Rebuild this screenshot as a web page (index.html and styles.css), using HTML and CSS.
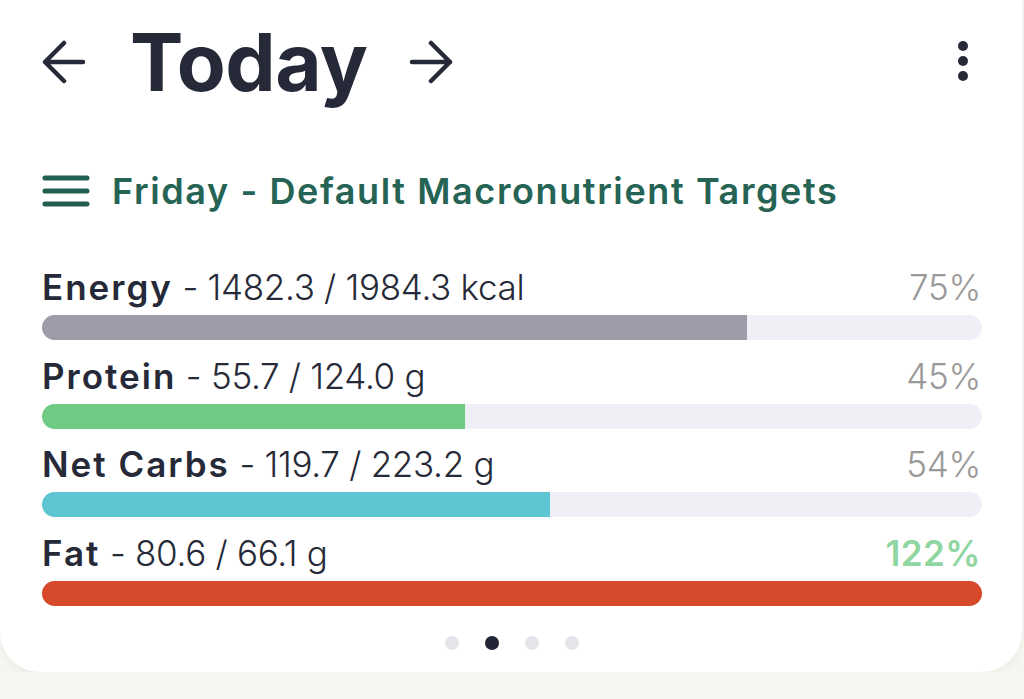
FILE: index.html
```html
<!DOCTYPE html>
<html lang="en">

<head>
    <meta charset="UTF-8">
    <meta name="viewport" content="width=device-width, initial-scale=1.0">
    <title>Today - Macros</title>
    <link rel="stylesheet" href="styles.css">
</head>

<body>
    <div class="card">
        <div class="header">
            <button class="nav-btn" aria-label="Previous day">
                <svg width="44" height="44" viewBox="0 0 44 44">
                    <path d="M3 22 H41 M22 3 L3 22 L22 41" fill="none" stroke="#262a38" stroke-width="4.5"
                        stroke-linecap="round" stroke-linejoin="round" />
                </svg>
            </button>
            <h1 class="title">Today</h1>
            <button class="nav-btn" aria-label="Next day">
                <svg width="44" height="44" viewBox="0 0 44 44">
                    <path d="M41 22 H3 M22 3 L41 22 L22 41" fill="none" stroke="#262a38" stroke-width="4.5"
                        stroke-linecap="round" stroke-linejoin="round" />
                </svg>
            </button>
            <div class="spacer"></div>
            <button class="more-btn" aria-label="More">
                <span></span><span></span><span></span>
            </button>
        </div>

        <div class="targets">
            <svg width="48" height="32" viewBox="0 0 48 32">
                <path d="M3 3 H45 M3 16 H45 M3 29 H45" stroke="#225f50" stroke-width="5" stroke-linecap="round" />
            </svg>
            <span>Friday - Default Macronutrient Targets</span>
        </div>

        <div class="macros">
            <div class="macro">
                <div class="macro-label">
                    <span><strong>Energy</strong> - 1482.3 / 1984.3 kcal</span>
                    <span class="pct">75%</span>
                </div>
                <div class="track"><div class="fill energy" style="width:75%"></div></div>
            </div>
            <div class="macro">
                <div class="macro-label">
                    <span><strong>Protein</strong> - 55.7 / 124.0 g</span>
                    <span class="pct">45%</span>
                </div>
                <div class="track"><div class="fill protein" style="width:45%"></div></div>
            </div>
            <div class="macro">
                <div class="macro-label">
                    <span><strong>Net Carbs</strong> - 119.7 / 223.2 g</span>
                    <span class="pct">54%</span>
                </div>
                <div class="track"><div class="fill carbs" style="width:54%"></div></div>
            </div>
            <div class="macro">
                <div class="macro-label">
                    <span><strong>Fat</strong> - 80.6 / 66.1 g</span>
                    <span class="pct over">122%</span>
                </div>
                <div class="track"><div class="fill fat" style="width:100%"></div></div>
            </div>
        </div>

        <div class="pager">
            <span class="dot"></span>
            <span class="dot active"></span>
            <span class="dot"></span>
            <span class="dot"></span>
        </div>
    </div>
</body>

</html>
```

FILE: styles.css
```css
body {
    font-family: Inter, "Noto Sans", sans-serif;
    background: #f7f5ef;
    margin: 0;
    padding: 0;
}

.card {
    width: 1022px;
    height: 672px;
    box-sizing: border-box;
    background: #fff;
    border-radius: 0 0 40px 40px;
    box-shadow: 0 2px 10px #0000000d;
    padding: 0 40px 0 42px;
}

.header {
    display: flex;
    align-items: center;
    height: 124px;
}

.nav-btn,
.more-btn {
    background: none;
    border: none;
    padding: 0;
    cursor: pointer;
}

.nav-btn svg {
    display: block;
}

.title {
    margin: 0 42px 0 44px;
    font-size: 80px;
    font-weight: 700;
    color: #262a38;
    letter-spacing: -0.5px;
    line-height: 1;
}

.spacer {
    flex: 1;
}

.more-btn {
    display: flex;
    flex-direction: column;
    gap: 5px;
    margin-right: 14px;
    margin-top: -2px;
}

.more-btn span {
    width: 10px;
    height: 10px;
    border-radius: 50%;
    background: #262a38;
}

.targets {
    display: flex;
    align-items: center;
    gap: 22px;
    margin-top: 45px;
    color: #256354;
    font-size: 36px;
    line-height: 44px;
    font-weight: 600;
    letter-spacing: 1.6px;
}

.targets svg {
    display: block;
}

.macros {
    margin-top: 53px;
}

.macro {
    margin-bottom: 14.6px;
}

.macro:last-child {
    margin-bottom: 0;
}

.macro-label {
    display: flex;
    justify-content: space-between;
    align-items: baseline;
    font-size: 35px;
    font-weight: 300;
    color: #262a38;
    line-height: 42px;
    margin-bottom: 7px;
    letter-spacing: -0.3px;
}

.macro-label strong {
    font-weight: 600;
    letter-spacing: 2px;
}

.pct {
    color: #999;
    margin-right: 1px;
}

.pct.over {
    color: #8fd6a0;
    font-weight: 600;
    letter-spacing: 0.5px;
}

.track {
    height: 25px;
    border-radius: 13px;
    background: #eff0f6;
    overflow: hidden;
}

.fill {
    height: 100%;
}

.energy {
    background: #9c9da8;
}

.protein {
    background: #6fcb84;
}

.carbs {
    background: #5ec6d2;
}

.fat {
    background: #d6492a;
}

.pager {
    display: flex;
    justify-content: center;
    gap: 26px;
    margin-top: 30px;
}

.dot {
    width: 14px;
    height: 14px;
    border-radius: 50%;
    background: #e4e5ea;
}

.dot.active {
    background: #222535;
}
```
